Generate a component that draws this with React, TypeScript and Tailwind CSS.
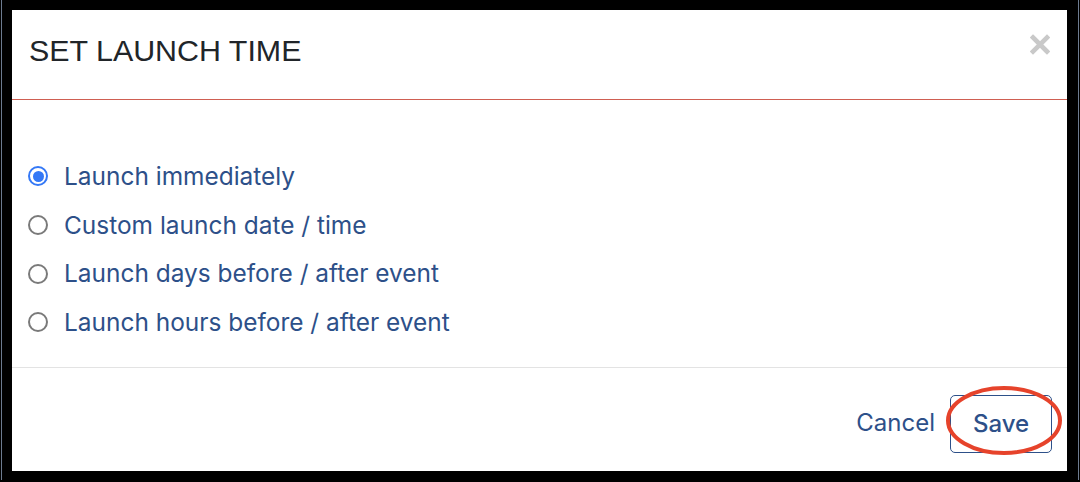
import React from "react";

const options = [
  "Launch immediately",
  "Custom launch date / time",
  "Launch days before / after event",
  "Launch hours before / after event",
];

function Radio({ checked }: { checked: boolean }) {
  return checked ? (
    <span className="flex h-[20px] w-[20px] shrink-0 items-center justify-center rounded-full border-[2px] border-[#3478f6] bg-white">
      <span className="h-[11px] w-[11px] rounded-full bg-[#3478f6]" />
    </span>
  ) : (
    <span className="h-[20px] w-[20px] shrink-0 rounded-full border-[2px] border-[#7a7a7a] bg-white" />
  );
}

export default function App() {
  return (
    <div className="relative h-[482px] w-[1080px] overflow-hidden bg-black pl-[12px] pr-[13px] pt-[10px] pb-[11px]">
      <div className="absolute left-[1px] top-0 h-[480px] w-[1px] bg-[#6d7b90]" />
      <div className="absolute right-[1px] top-0 h-[480px] w-[1px] bg-[#6d7b90]" />
      <div className="flex h-[461px] w-[1055px] flex-col bg-white">
        <div className="flex h-[90px] shrink-0 items-start justify-between border-b border-[#cf5f52] pl-[17px] pr-[17px] pt-[25px]">
          <h1 className="text-[30.4px] leading-none text-[#212529] [font-family:'Liberation_Sans',Arial,sans-serif]">
            SET LAUNCH TIME
          </h1>
          <svg width="20" height="21" viewBox="0 0 20 21" className="-mt-[1px]">
            <path d="M3 3.5 L17 17.5 M17 3.5 L3 17.5" stroke="#c9c9c9" strokeWidth="4.6" strokeLinecap="square" />
          </svg>
        </div>
        <div className="flex h-[268px] shrink-0 flex-col border-b border-[#e3e3e3] pl-[16px] pt-[52px] [font-family:Inter,'Liberation_Sans',sans-serif]">
          {options.map((o, i) => (
            <div key={o} className="flex h-[48.7px] items-center gap-[16px]">
              <Radio checked={i === 0} />
              <span className="text-[24.45px] leading-none text-[#2d5089]">{o}</span>
            </div>
          ))}
        </div>
        <div className="relative flex flex-1 items-start justify-end pr-[15px] pt-[27px] [font-family:Inter,'Liberation_Sans',sans-serif]">
          <span className="mr-[15px] mt-[16px] text-[24px] leading-none text-[#2d5089]">Cancel</span>
          <button className="flex h-[58px] w-[102px] items-center justify-center rounded-[5px] border border-[#2d5089] text-[24px] font-medium leading-none text-[#2d5089]">
            Save
          </button>
          <svg className="pointer-events-none absolute left-[932px] top-[17px]" width="120" height="72" viewBox="0 0 120 72">
            <ellipse cx="60" cy="35.5" rx="56" ry="32.5" fill="none" stroke="#e6432b" strokeWidth="4" />
          </svg>
        </div>
      </div>
    </div>
  );
}
